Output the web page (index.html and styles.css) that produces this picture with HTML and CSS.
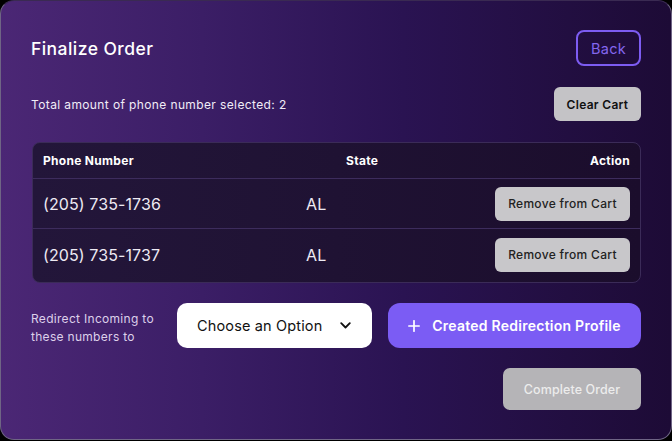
FILE: index.html
```html
<!DOCTYPE html>
<html lang="en">
<head>
<meta charset="utf-8">
<title>Finalize Order</title>
<link rel="stylesheet" href="styles.css">
</head>
<body>
<div class="card">
  <div class="head">
    <h1 class="title">Finalize Order</h1>
    <button class="btn-back">Back</button>
  </div>
  <div class="summary">
    <p class="total">Total amount of phone number selected: 2</p>
    <button class="btn-clear">Clear Cart</button>
  </div>
  <div class="table">
    <div class="thead">
      <span class="th">Phone Number</span>
      <span class="th th-state">State</span>
      <span class="th th-action">Action</span>
    </div>
    <div class="trow">
      <span class="phone">(205) 735-1736</span>
      <span class="state">AL</span>
      <button class="btn-remove">Remove from Cart</button>
    </div>
    <div class="trow last">
      <span class="phone">(205) 735-1737</span>
      <span class="state">AL</span>
      <button class="btn-remove">Remove from Cart</button>
    </div>
  </div>
  <div class="redirect">
    <p class="redirect-label">Redirect Incoming to<br>these numbers to</p>
    <div class="select">
      <span>Choose an Option</span>
      <svg class="chev" width="11" height="7" viewBox="0 0 11 7"><path d="M1.2 1.2 5.5 5.5 9.8 1.2" fill="none" stroke="#111" stroke-width="1.8" stroke-linecap="round" stroke-linejoin="round"/></svg>
    </div>
    <button class="btn-create">
      <svg class="plus" width="12" height="12" viewBox="0 0 12 12"><path d="M6 0.8V11.2M0.8 6H11.2" stroke="#fff" stroke-width="1.7" stroke-linecap="round"/></svg>
      <span>Created Redirection Profile</span>
    </button>
  </div>
  <div class="footer">
    <button class="btn-complete">Complete Order</button>
  </div>
</div>
</body>
</html>
```

FILE: styles.css
```css
* { box-sizing: border-box; }
html, body { margin: 0; padding: 0; background: #000; }
body { font-family: Inter, "Open Sans", sans-serif; width: 672px; height: 441px; overflow: hidden; }
button { font-family: inherit; cursor: pointer; }

.card {
  width: 672px;
  height: 440px;
  border: 1px solid #6f6585;
  border-top-color: #3a2a52;
  border-radius: 14px;
  background: linear-gradient(90deg, #4b2775 0%, #3b1e66 30%, #2a1352 60%, #1d0b36 100%);
  padding: 29px 30px 0 30px;
  display: flex;
  flex-direction: column;
}

.head { display: flex; justify-content: space-between; align-items: center; height: 36px; }
.title { margin: 0; color: #fff; font-size: 17.5px; font-weight: 500; letter-spacing: 0.45px; }
.btn-back {
  width: 65px; height: 36px;
  border: 2px solid #7d5cf2; border-radius: 8px;
  background: transparent; color: #8466ee;
  font-size: 14.5px; font-weight: 400; letter-spacing: 0.3px;
}

.summary { display: flex; justify-content: space-between; align-items: center; margin-top: 21px; height: 34px; }
.total { margin: 0; color: #f1ecf7; font-size: 12px; letter-spacing: 0.38px; }
.btn-clear {
  width: 87px; height: 34px;
  border: none; border-radius: 6px;
  background: #c4c3c6; color: #111;
  font-size: 12px; font-weight: 600; letter-spacing: 0.3px;
}

.table {
  margin-top: 21px;
  margin-left: 1px;
  border: 1px solid #3b2b58;
  border-radius: 8px;
  background: linear-gradient(90deg, #23163a 0%, #1f1233 50%, #1b0d2c 100%);
  padding-bottom: 2px;
}
.thead, .trow {
  display: grid;
  grid-template-columns: 263px 1fr auto;
  align-items: center;
  padding: 0 10px 0 10px;
  border-bottom: 1px solid #3d2c5d;
}
.thead { height: 36px; }
.trow { height: 50px; }
.trow.last { border-bottom: none; height: 51px; }
.th { color: #fff; font-size: 12px; font-weight: 700; letter-spacing: 0.3px; }
.th-state { padding-left: 40px; }
.th-action { text-align: right; }
.phone, .state { color: #eeeaf3; font-size: 16px; font-weight: 400; letter-spacing: 0.1px; }
.btn-remove {
  width: 135px; height: 34px;
  border: none; border-radius: 6px;
  background: #c8c7ca; color: #222;
  font-size: 12px; font-weight: 500; letter-spacing: 0.3px;
}

.redirect { display: flex; align-items: center; margin-top: 20px; height: 45px; }
.redirect-label { margin: 0; width: 146px; color: #ddd0ea; font-size: 12px; line-height: 18px; padding-top: 4px; letter-spacing: 0.3px; }
.select {
  width: 195px; height: 45px;
  background: #fff; border-radius: 10px;
  display: flex; align-items: center; justify-content: space-between;
  padding: 0 21px 0 20px;
  color: #111; font-size: 14.5px; letter-spacing: 0.15px;
}
.btn-create {
  margin-left: 16px;
  flex: 1;
  height: 45px;
  border: none; border-radius: 12px;
  background: #7b5cf4; color: #fff;
  display: flex; align-items: center; justify-content: center; gap: 12px;
  font-size: 14px; font-weight: 600; letter-spacing: 0.25px;
}

.footer { display: flex; justify-content: flex-end; margin-top: 20px; }
.btn-complete {
  width: 138px; height: 42px;
  border: none; border-radius: 7px;
  background: #b5b4b7; color: #ececec;
  font-size: 12.5px; font-weight: 500; letter-spacing: 0.1px;
}
```
